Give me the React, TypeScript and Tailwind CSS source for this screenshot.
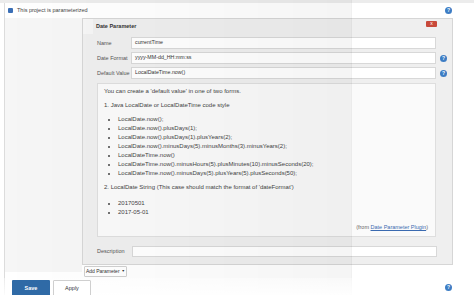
function HelpIcon() {
  return (
    <span className="flex h-[7px] w-[7px] items-center justify-center rounded-full bg-[#3d7dc4] text-[5px] font-bold leading-none text-white">
      ?
    </span>
  );
}

const bulletsA = [
  "LocalDate.now();",
  "LocalDate.now().plusDays(1);",
  "LocalDate.now().plusDays(1).plusYears(2);",
  "LocalDate.now().minusDays(5).minusMonths(3).minusYears(2);",
  "LocalDateTime.now()",
  "LocalDateTime.now().minusHours(5).plusMinutes(10).minusSeconds(20);",
  "LocalDateTime.now().minusDays(5).plusYears(5).plusSeconds(50);",
];

const bulletsB = ["20170501", "2017-05-01"];

function Row({ label, value, help }: { label: string; value: string; help?: boolean }) {
  return (
    <div className="flex h-[12px] items-center">
      <label className="w-[48px] shrink-0 pl-[14px] text-[5.5px] whitespace-nowrap text-[#555]">{label}</label>
      <div className="flex h-full w-[305px] items-center border border-[#d8d8d8] bg-white px-[3px] text-[5.3px] text-[#333]">
        {value}
      </div>
      <div className="flex w-[15px] justify-center">{help && <HelpIcon />}</div>
    </div>
  );
}

export default function App() {
  return (
    <div
      className="relative h-[295px] w-[474px] overflow-hidden bg-white text-[#333]"
      style={{ fontFamily: '"Liberation Sans", Arial, sans-serif' }}
    >
      <div className="h-[3px] bg-[#ececec]" />
      <div className="ml-[4px] h-[292px] border-l border-[#dcdcdc]">
        {/* checkbox row */}
        <div className="flex h-[15px] items-center">
          <span className="ml-[3px] flex h-[5px] w-[5px] items-center justify-center rounded-[1px] bg-[#3b6fb6]" />
          <span className="ml-[4px] text-[5.5px] text-[#444]">This project is parameterized</span>
          <div className="ml-auto mr-[22px]">
            <HelpIcon />
          </div>
        </div>

        <div className="flex">
          <div className="h-[254px] w-[77px] bg-[#f6f6f6]" />
          <div className="flex flex-col">
            {/* panel */}
            <div className="h-[247px] w-[371px] border border-[#d6d6d6] bg-[#efefef]">
              <div className="flex h-[15px] items-center">
                <div className="h-full w-[10px] bg-[#f6f6f6]" />
                <span className="ml-[3px] text-[5.5px] font-bold text-[#333]">Date Parameter</span>
                <span className="ml-auto mr-[15px] -mt-[6px] flex h-[6px] w-[11px] items-center justify-center rounded-[1px] bg-[#c8493a] text-[5px] leading-none text-white">
                  x
                </span>
              </div>
              <div className="mt-[3px] flex flex-col gap-[3px]">
                <Row label="Name" value="currentTime" />
                <Row label="Date Format" value="yyyy-MM-dd_HH:mm:ss" help />
                <Row label="Default Value" value="LocalDateTime.now()" help />
              </div>

              {/* help box */}
              <div className="ml-[14px] mt-[4px] h-[154px] w-[339px] border border-[#dedede] bg-[#fafafa] px-[6px] pt-[3px] text-[6px] leading-[9px] text-[#444]">
                <p>You can create a 'default value' in one of two forms.</p>
                <p className="mt-[5px]">1. Java LocalDate or LocalDateTime code style</p>
                <ul className="mt-[5px] list-disc pl-[14px]">
                  {bulletsA.map((b) => (
                    <li key={b}>{b}</li>
                  ))}
                </ul>
                <p className="mt-[5px]">2. LocalDate String (This case should match the format of 'dateFormat')</p>
                <ul className="mt-[7px] list-disc pl-[14px]">
                  {bulletsB.map((b) => (
                    <li key={b}>{b}</li>
                  ))}
                </ul>
                <p className="mt-[6px] pr-[1px] text-right text-[5.5px] text-[#666]">
                  (from <span className="text-[#3a6ab0] underline">Date Parameter Plugin</span>)
                </p>
              </div>

              <div className="mt-[9px] flex h-[11px] items-center">
                <label className="w-[49px] shrink-0 pl-[14px] text-[5.5px] text-[#555]">Description</label>
                <div className="h-full w-[305px] border border-[#d8d8d8] bg-white" />
              </div>
            </div>

            <div className="ml-[2px] mt-[1px] flex h-[11px] w-[43px] items-center justify-center gap-[2px] rounded-[1px] border border-[#cfcfcf] bg-white text-[5px] text-[#333]">
              Add Parameter <span className="text-[3.5px]">▼</span>
            </div>
          </div>
        </div>
      </div>

      {/* shading overlay */}
      <div className="pointer-events-none absolute left-0 top-0 h-full w-[352px] border-r border-black/[0.06] bg-gradient-to-r from-black/[0.0] to-black/[0.04]" />

      {/* sticky bottom bar */}
      <div className="absolute bottom-0 left-0 flex h-[17px] w-full items-start gap-[3px] bg-gradient-to-b from-white/40 to-white/90 pl-[12px] pt-[2px]">
        <button className="flex h-[16px] w-[38px] items-center justify-center rounded-[1px] bg-[#2f6aa6] text-[5.5px] font-bold text-white">
          Save
        </button>
        <button className="flex h-[16px] w-[38px] items-center justify-center rounded-[1px] border border-[#cfcfcf] bg-white text-[5.5px] text-[#333]">
          Apply
        </button>
        <div className="ml-auto mr-[22px] mt-[4px]">
          <HelpIcon />
        </div>
      </div>
    </div>
  );
}
